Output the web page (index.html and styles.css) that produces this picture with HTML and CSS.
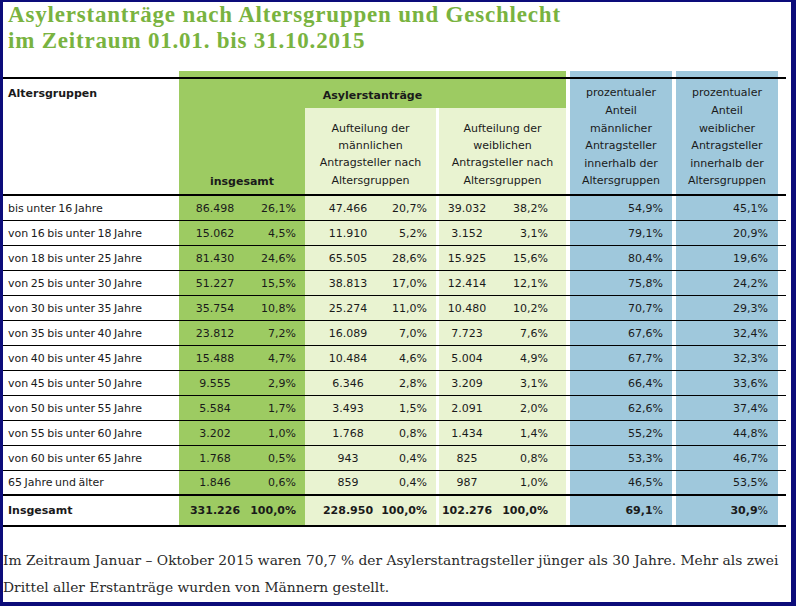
FILE: index.html
```html
<!DOCTYPE html>
<html lang="de">
<head>
<meta charset="utf-8">
<title>Asylerstanträge nach Altersgruppen und Geschlecht</title>
<link rel="stylesheet" href="styles.css">
</head>
<body>
<div class="frame">
  <h1 class="title"><span class="t1">Asylerstanträge nach Altersgruppen und Geschlecht</span><span class="t2">im Zeitraum 01.01. bis 31.10.2015</span></h1>

  <div class="head grid">
    <div class="h-label">Altersgruppen</div>
    <div class="h-group">Asylerstanträge</div>
    <div class="h-total">insgesamt</div>
    <div class="h-male">Aufteilung der<br>männlichen<br>Antragsteller nach<br>Altersgruppen</div>
    <div class="h-female">Aufteilung der<br>weiblichen<br>Antragsteller nach<br>Altersgruppen</div>
    <div class="h-blue1">prozentualer<br>Anteil<br>männlicher<br>Antragsteller<br>innerhalb der<br>Altersgruppen</div>
    <div class="h-blue2">prozentualer<br>Anteil<br>weiblicher<br>Antragsteller<br>innerhalb der<br>Altersgruppen</div>
    <div class="h-line1"></div>
    <div class="h-line2"></div>
  </div>

  <div class="row grid"><div class="c-label">bis unter 16 Jahre</div><div class="dg num">86.498</div><div class="dg pct">26,1%</div><div class="lg num">47.466</div><div class="lg pct">20,7%</div><div class="gap"></div><div class="lg num">39.032</div><div class="lg pct pf">38,2%</div><div></div><div class="bl pct">54,9%</div><div></div><div class="bl pct pb">45,1%</div><div></div></div>
  <div class="row grid"><div class="c-label">von 16 bis unter 18 Jahre</div><div class="dg num">15.062</div><div class="dg pct">4,5%</div><div class="lg num">11.910</div><div class="lg pct">5,2%</div><div class="gap"></div><div class="lg num">3.152</div><div class="lg pct pf">3,1%</div><div></div><div class="bl pct">79,1%</div><div></div><div class="bl pct pb">20,9%</div><div></div></div>
  <div class="row grid"><div class="c-label">von 18 bis unter 25 Jahre</div><div class="dg num">81.430</div><div class="dg pct">24,6%</div><div class="lg num">65.505</div><div class="lg pct">28,6%</div><div class="gap"></div><div class="lg num">15.925</div><div class="lg pct pf">15,6%</div><div></div><div class="bl pct">80,4%</div><div></div><div class="bl pct pb">19,6%</div><div></div></div>
  <div class="row grid"><div class="c-label">von 25 bis unter 30 Jahre</div><div class="dg num">51.227</div><div class="dg pct">15,5%</div><div class="lg num">38.813</div><div class="lg pct">17,0%</div><div class="gap"></div><div class="lg num">12.414</div><div class="lg pct pf">12,1%</div><div></div><div class="bl pct">75,8%</div><div></div><div class="bl pct pb">24,2%</div><div></div></div>
  <div class="row grid"><div class="c-label">von 30 bis unter 35 Jahre</div><div class="dg num">35.754</div><div class="dg pct">10,8%</div><div class="lg num">25.274</div><div class="lg pct">11,0%</div><div class="gap"></div><div class="lg num">10.480</div><div class="lg pct pf">10,2%</div><div></div><div class="bl pct">70,7%</div><div></div><div class="bl pct pb">29,3%</div><div></div></div>
  <div class="row grid"><div class="c-label">von 35 bis unter 40 Jahre</div><div class="dg num">23.812</div><div class="dg pct">7,2%</div><div class="lg num">16.089</div><div class="lg pct">7,0%</div><div class="gap"></div><div class="lg num">7.723</div><div class="lg pct pf">7,6%</div><div></div><div class="bl pct">67,6%</div><div></div><div class="bl pct pb">32,4%</div><div></div></div>
  <div class="row grid"><div class="c-label">von 40 bis unter 45 Jahre</div><div class="dg num">15.488</div><div class="dg pct">4,7%</div><div class="lg num">10.484</div><div class="lg pct">4,6%</div><div class="gap"></div><div class="lg num">5.004</div><div class="lg pct pf">4,9%</div><div></div><div class="bl pct">67,7%</div><div></div><div class="bl pct pb">32,3%</div><div></div></div>
  <div class="row grid"><div class="c-label">von 45 bis unter 50 Jahre</div><div class="dg num">9.555</div><div class="dg pct">2,9%</div><div class="lg num">6.346</div><div class="lg pct">2,8%</div><div class="gap"></div><div class="lg num">3.209</div><div class="lg pct pf">3,1%</div><div></div><div class="bl pct">66,4%</div><div></div><div class="bl pct pb">33,6%</div><div></div></div>
  <div class="row grid"><div class="c-label">von 50 bis unter 55 Jahre</div><div class="dg num">5.584</div><div class="dg pct">1,7%</div><div class="lg num">3.493</div><div class="lg pct">1,5%</div><div class="gap"></div><div class="lg num">2.091</div><div class="lg pct pf">2,0%</div><div></div><div class="bl pct">62,6%</div><div></div><div class="bl pct pb">37,4%</div><div></div></div>
  <div class="row grid"><div class="c-label">von 55 bis unter 60 Jahre</div><div class="dg num">3.202</div><div class="dg pct">1,0%</div><div class="lg num">1.768</div><div class="lg pct">0,8%</div><div class="gap"></div><div class="lg num">1.434</div><div class="lg pct pf">1,4%</div><div></div><div class="bl pct">55,2%</div><div></div><div class="bl pct pb">44,8%</div><div></div></div>
  <div class="row grid"><div class="c-label">von 60 bis unter 65 Jahre</div><div class="dg num">1.768</div><div class="dg pct">0,5%</div><div class="lg num">943</div><div class="lg pct">0,4%</div><div class="gap"></div><div class="lg num">825</div><div class="lg pct pf">0,8%</div><div></div><div class="bl pct">53,3%</div><div></div><div class="bl pct pb">46,7%</div><div></div></div>
  <div class="row grid last"><div class="c-label">65 Jahre und älter</div><div class="dg num">1.846</div><div class="dg pct">0,6%</div><div class="lg num">859</div><div class="lg pct">0,4%</div><div class="gap"></div><div class="lg num">987</div><div class="lg pct pf">1,0%</div><div></div><div class="bl pct">46,5%</div><div></div><div class="bl pct pb">53,5%</div><div></div></div>
  <div class="row grid total"><div class="c-label">Insgesamt</div><div class="dg num">331.226</div><div class="dg pct">100,0%</div><div class="lg num">228.950</div><div class="lg pct">100,0%</div><div class="gap"></div><div class="lg num">102.276</div><div class="lg pct pf">100,0%</div><div></div><div class="bl pct">69,1<span class="reg">%</span></div><div></div><div class="bl pct pb">30,9<span class="reg">%</span></div><div></div></div>

  <p class="note">Im Zeitraum Januar – Oktober 2015 waren 70,7 % der Asylerstantragsteller jünger als 30 Jahre. Mehr als zwei Drittel aller Erstanträge wurden von Männern gestellt.</p>
</div>
</body>
</html>
```

FILE: styles.css
```css
html, body {
  margin: 0;
  padding: 0;
}
body {
  background: #0c0c7a;
  width: 796px;
  height: 606px;
  box-sizing: border-box;
  padding: 2px 5px 4px 3px;
}
.frame {
  background: #fff;
  width: 788px;
  height: 600px;
  font-family: "DejaVu Sans", sans-serif;
  font-size: 11px;
  color: #1a1a1a;
}
.title {
  margin: 0;
  padding-left: 5px;
  font-family: "Liberation Serif", serif;
  font-weight: bold;
  font-size: 23px;
  letter-spacing: 0.8px;
  color: #79b340;
}
.t1, .t2 {
  display: block;
  line-height: 25.5px;
}
.grid {
  display: grid;
  grid-template-columns: 176px 72px 54px 86px 45px 3px 56px 71px 4px 102px 4px 102px 8px;
  width: 783px;
}
.head {
  margin-top: 18px;
  grid-template-rows: 6px 2px 29px 86px 2px;
}
.h-label {
  grid-column: 1;
  grid-row: 3;
  font-weight: bold;
  padding-left: 5px;
  display: flex;
  align-items: center;
}
.h-group {
  grid-column: 2 / 9;
  grid-row: 1 / 4;
  background: #9dcb62;
  font-weight: bold;
  display: flex;
  align-items: center;
  justify-content: center;
  padding-top: 11px;
}
.h-total {
  grid-column: 2 / 4;
  grid-row: 4;
  background: #9dcb62;
  font-weight: bold;
  display: flex;
  align-items: flex-end;
  justify-content: center;
  padding-bottom: 6px;
}
.h-male, .h-female {
  grid-row: 4;
  background: #e9f3d1;
  text-align: center;
  line-height: 17.3px;
  display: flex;
  flex-direction: column;
  justify-content: flex-end;
  padding-bottom: 5px;
}
.h-male { grid-column: 4 / 6; }
.h-female { grid-column: 7 / 9; }
.h-blue1, .h-blue2 {
  grid-row: 1 / 5;
  background: #9fc8dc;
  text-align: center;
  line-height: 17.6px;
  display: flex;
  flex-direction: column;
  justify-content: flex-end;
  padding-bottom: 4px;
}
.h-blue1 { grid-column: 10; }
.h-blue2 { grid-column: 12; }
.h-line1 {
  grid-column: 1 / -1;
  grid-row: 2;
  background: #000;
}
.h-line2 {
  grid-column: 1 / -1;
  grid-row: 5;
  background: #000;
}
.row {
  height: 25px;
  box-sizing: border-box;
  border-bottom: 1px solid #000;
}
.row.last {
  border-bottom-width: 2px;
}
.row.total {
  height: 31px;
  border-bottom-width: 2px;
  font-weight: bold;
}
.row > div {
  display: flex;
  align-items: center;
}
.c-label {
  padding-left: 5px;
  word-spacing: -1px;
}
.dg { background: #9dcb62; }
.lg { background: #e9f3d1; }
.bl { background: #9fc8dc; }
.gap { background: #fff; }
.num { justify-content: center; }
.pct { justify-content: flex-end; padding-right: 9px; }
.pct.pf { padding-right: 18px; }
.pct.pb { padding-right: 10px; }
.reg { font-weight: normal; }
.note {
  margin: 20px 0 0 0;
  font-family: "DejaVu Serif", serif;
  font-size: 13.8px;
  line-height: 27px;
  color: #2a2a2a;
}
```
